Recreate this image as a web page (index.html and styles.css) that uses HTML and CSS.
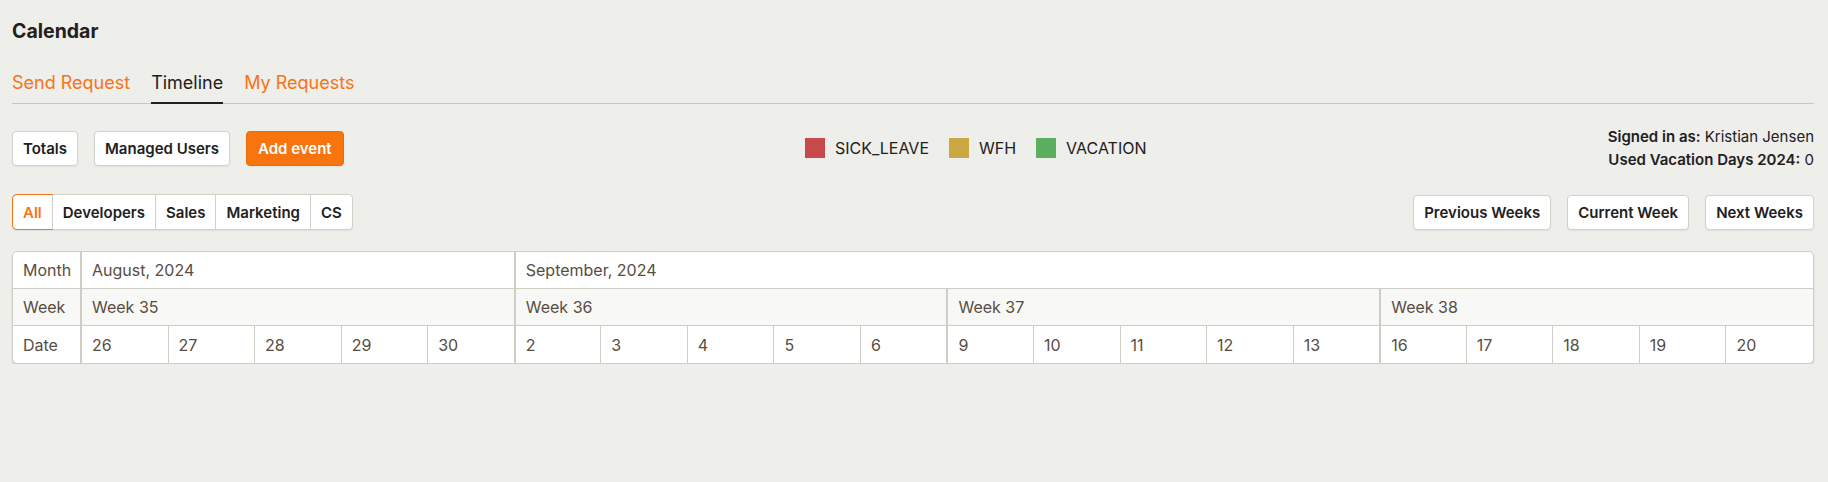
FILE: index.html
```html
<!DOCTYPE html>
<html lang="en">
<head>
<meta charset="utf-8">
<title>Calendar</title>
<link rel="stylesheet" href="styles.css">
</head>
<body>
<div class="page">
  <h1 class="title">Calendar</h1>
  <nav class="tabs">
    <a class="tab">Send Request</a>
    <a class="tab active">Timeline</a>
    <a class="tab">My Requests</a>
  </nav>

  <div class="toolbar">
    <div class="actions">
      <button class="btn">Totals</button>
      <button class="btn">Managed Users</button>
      <button class="btn primary">Add event</button>
    </div>
    <div class="legend">
      <span class="swatch sick"></span><span class="legend-label">SICK_LEAVE</span>
      <span class="swatch wfh"></span><span class="legend-label">WFH</span>
      <span class="swatch vacation"></span><span class="legend-label">VACATION</span>
    </div>
    <div class="user">
      <div><b>Signed in as:</b> Kristian Jensen</div>
      <div><b>Used Vacation Days 2024:</b> 0</div>
    </div>
  </div>

  <div class="filters">
    <div class="segmented">
      <button class="seg active">All</button>
      <button class="seg">Developers</button>
      <button class="seg">Sales</button>
      <button class="seg">Marketing</button>
      <button class="seg">CS</button>
    </div>
    <div class="week-nav">
      <button class="btn">Previous Weeks</button>
      <button class="btn">Current Week</button>
      <button class="btn">Next Weeks</button>
    </div>
  </div>

  <div class="table-wrap">
    <table class="timeline">
      <colgroup>
        <col class="col-label">
        <col span="20">
      </colgroup>
      <tr class="row-month">
        <th class="label">Month</th>
        <td colspan="5" class="ws">August, 2024</td>
        <td colspan="15" class="ws last">September, 2024</td>
      </tr>
      <tr class="row-week">
        <th class="label">Week</th>
        <td colspan="5" class="ws">Week 35</td>
        <td colspan="5" class="ws">Week 36</td>
        <td colspan="5" class="ws">Week 37</td>
        <td colspan="5" class="ws last">Week 38</td>
      </tr>
      <tr class="row-date">
        <th class="label">Date</th>
        <td class="ws">26</td><td>27</td><td>28</td><td>29</td><td>30</td>
        <td class="ws">2</td><td>3</td><td>4</td><td>5</td><td>6</td>
        <td class="ws">9</td><td>10</td><td>11</td><td>12</td><td>13</td>
        <td class="ws">16</td><td>17</td><td>18</td><td>19</td><td class="last">20</td>
      </tr>
    </table>
  </div>
</div>
</body>
</html>
```

FILE: styles.css
```css
* { box-sizing: border-box; }

html, body {
  margin: 0;
  background: #eeeeea;
}

body {
  font-family: Inter, "Noto Sans", "Liberation Sans", sans-serif;
  color: #1f1d1a;
}

.page {
  padding: 19px 14px 0 12px;
}

.title {
  margin: 0;
  font-size: 19.5px;
  font-weight: 700;
  line-height: 24px;
  color: #22201d;
}

.tabs {
  display: flex;
  gap: 21px;
  margin-top: 28px;
  border-bottom: 1px solid #c9c8bf;
}

.tab {
  font-size: 18px;
  line-height: 24px;
  padding-bottom: 7px;
  color: #f97316;
  border-bottom: 2px solid transparent;
  margin-bottom: -1px;
  cursor: pointer;
}

.tab.active {
  color: #22201d;
  border-bottom-color: #22201d;
}

.toolbar {
  display: flex;
  justify-content: space-between;
  align-items: center;
  margin-top: 21px;
}

.actions {
  display: flex;
  gap: 16px;
}

.btn {
  font-family: inherit;
  font-size: 15px;
  font-weight: 600;
  color: #22201d;
  background: #ffffff;
  border: 1px solid #d3d2ca;
  border-radius: 4px;
  height: 35px;
  padding: 0 10px;
  box-shadow: 0 1px 2px rgba(0, 0, 0, 0.06);
  cursor: pointer;
}

.btn.primary {
  background: #f8740f;
  border-color: #e96c0c;
  color: #ffffff;
  padding: 0 11px;
}

.legend {
  display: flex;
  align-items: center;
  font-size: 16px;
  color: #22201d;
}

.swatch {
  width: 20px;
  height: 20px;
  margin-right: 10px;
}

.swatch.sick { background: #c74a4b; }
.swatch.wfh { background: #cca842; }
.swatch.vacation { background: #5dae60; }

.legend-label {
  margin-right: 20px;
}

.legend-label:last-child {
  margin-right: 0;
}

.user {
  text-align: right;
  font-size: 15px;
  line-height: 23px;
  color: #22201d;
}

.user b {
  font-weight: 600;
}

.filters {
  display: flex;
  justify-content: space-between;
  align-items: center;
  margin-top: 23px;
}

.segmented {
  display: flex;
  background: #ffffff;
  border: 1px solid #d3d2ca;
  border-radius: 4px;
  box-shadow: 0 1px 2px rgba(0, 0, 0, 0.06);
}

.seg {
  font-family: inherit;
  font-size: 15px;
  font-weight: 600;
  color: #22201d;
  background: transparent;
  border: none;
  border-left: 1px solid #d3d2ca;
  height: 34px;
  padding: 0 10px;
  cursor: pointer;
}

.seg:first-child {
  border-left: none;
}

.seg.active {
  color: #f97316;
  outline: 1px solid #f97316;
  border-radius: 4px 0 0 4px;
  padding: 0 10px;
}

.week-nav {
  display: flex;
  gap: 16px;
}

.table-wrap {
  margin-top: 21px;
  background: #ffffff;
  border: 1px solid #cfcec5;
  border-radius: 5px;
  overflow: hidden;
  box-shadow: 0 2px 2px rgba(0, 0, 0, 0.12);
}

.timeline {
  width: 100%;
  table-layout: fixed;
  border-collapse: separate;
  border-spacing: 0;
  font-size: 16px;
  color: #584d42;
}

.col-label {
  width: 69px;
}

.timeline th,
.timeline td {
  text-align: left;
  font-weight: 400;
  padding: 8px 10px;
  line-height: 20px;
  height: 37px;
  border-right: 1px solid #cfcec5;
  border-bottom: 1px solid #cfcec5;
}

.timeline th.label {
  border-right: 2px solid #cfcec5;
}

.timeline td.ws {
  border-left: 1px solid #cfcec5;
}

.timeline tr td:nth-child(2) {
  border-left: none;
}

.timeline .last {
  border-right: none;
}

.timeline tr:last-child th,
.timeline tr:last-child td {
  border-bottom: none;
}

.row-week th,
.row-week td {
  background: #f8f8f6;
}
```
